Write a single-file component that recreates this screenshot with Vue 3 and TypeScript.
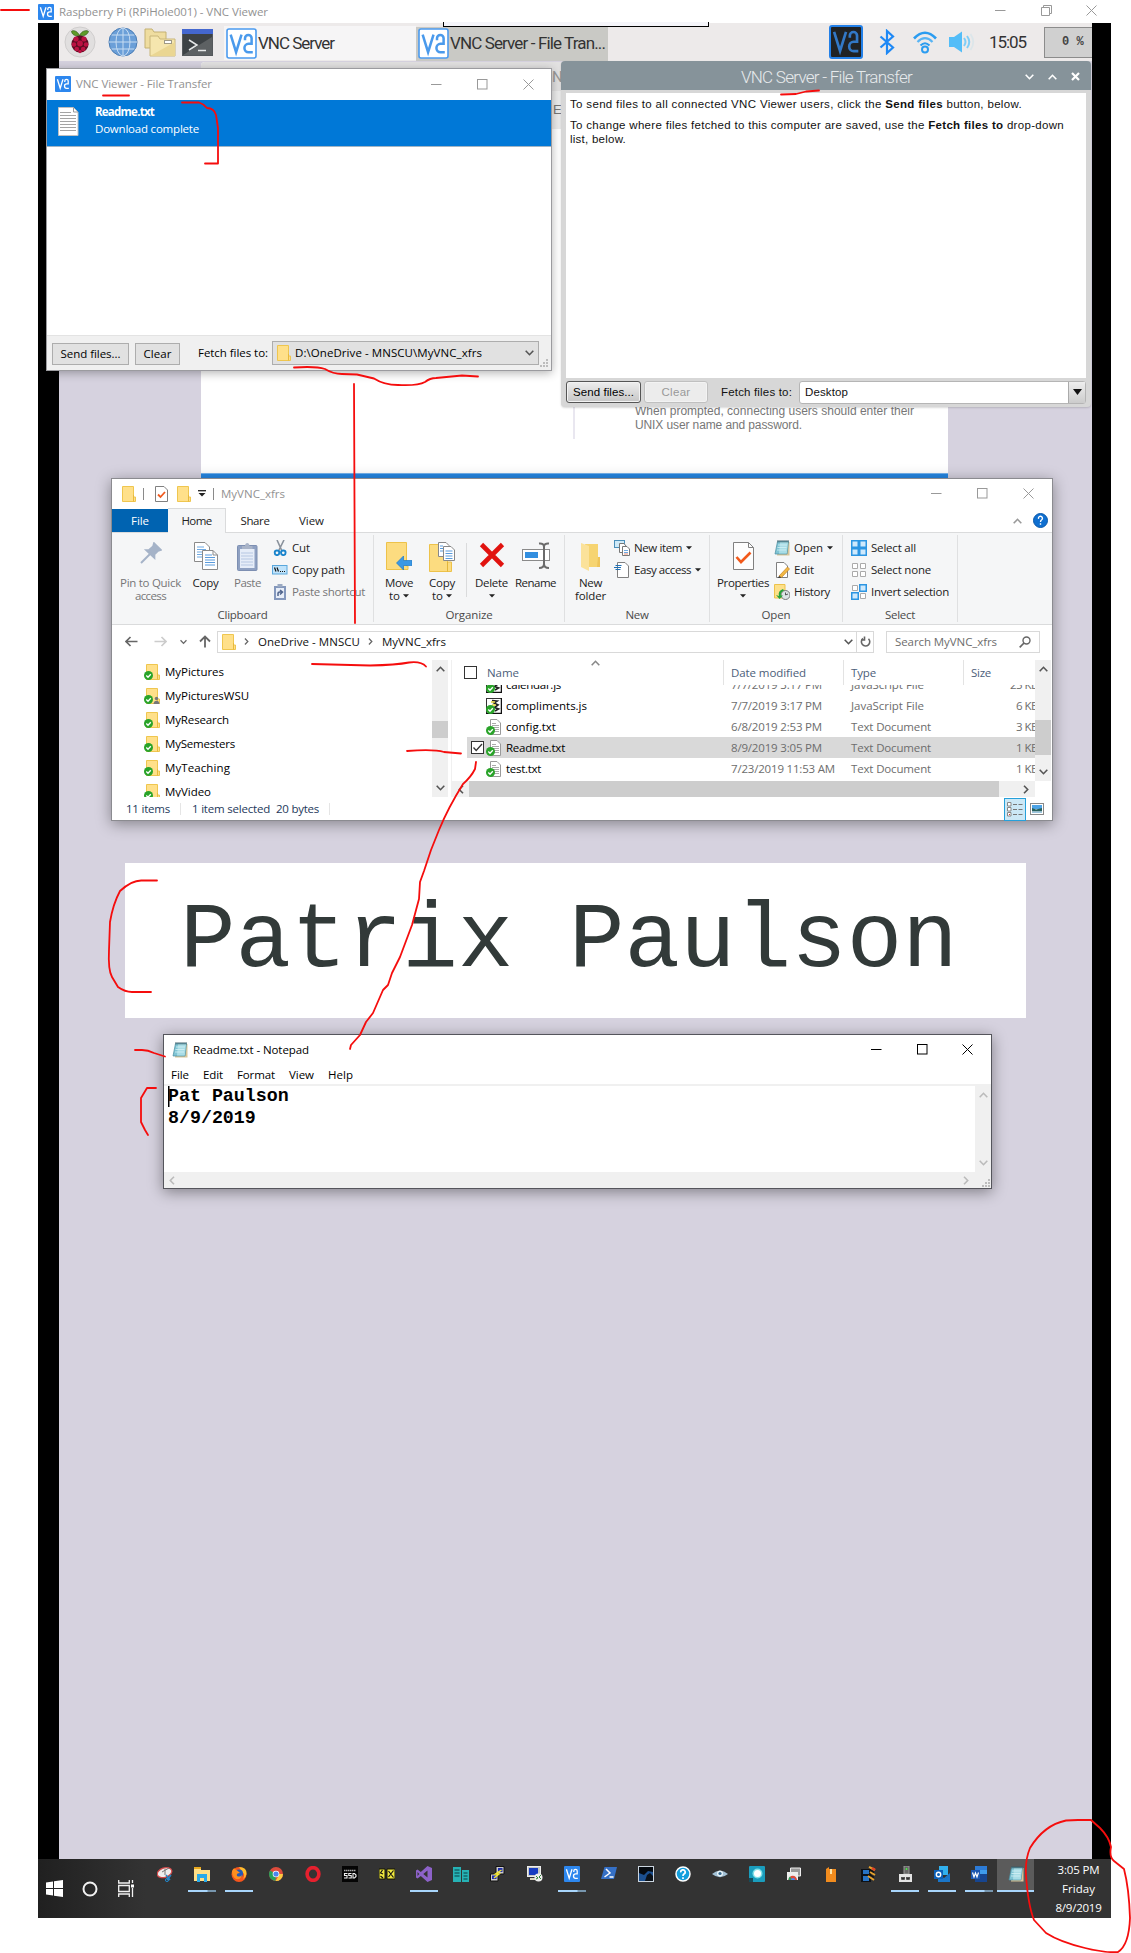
<script setup lang="ts">
import { h } from 'vue'
import type { Directive, FunctionalComponent } from 'vue'

// Spreads a label's letters so that it takes the given width in pixels.
const vFit: Directive<HTMLElement, number> = {
  mounted(el, binding) {
    const natural = el.getBoundingClientRect().width
    const count = (el.textContent ?? '').trim().length
    el.style.letterSpacing = `${(binding.value - natural) / count}px`
    el.style.width = `${binding.value}px`
  },
}

type IconDef = [number, number, string]

const vncGlyph = 'M2.4 3.2L5.2 12.2L8 3.2M9.8 6V5A1.700 1.700 0 0 1 13.200 5V7.900H11.600A2.100 2.200 0 0 0 11.600 12.300H13.800'
const folderArt = '<path d="M.5 .5H11.5V11H13.5V15.5H.5Z" fill="#ffe08a" stroke="#efc64f"/><path d="M11.5 9V15.5" stroke="#e8b93c"/>'
const okBadge = '<circle cx="4.500" cy="11.500" r="4.500" fill="#29a329"/><path d="M2.300 11.500l1.700 1.700 2.800-3" fill="none" stroke="#fff" stroke-width="1.300"/>'
const textPage = '<path d="M4.500 .500H11L14.500 4V15.500H4.500Z" fill="#fff" stroke="#9a9a9a"/><path d="M6 4.500h4M6 6.500h7M6 8.500h7M6 10.500h7M6 12.500h7" stroke="#aaa"/>'
const notepadArt = '<path d="M4 2H15.500V15.500H3Z" fill="#d8c59a"/><path d="M3.500 1.500H14.500L13 14H1Z" fill="#7fc4d4" stroke="#4b8ea0" stroke-width=".700"/><path d="M6 2H14L12.800 13.500H5Z" fill="#a9dde6"/><path d="M4 5h9M3.500 7.500h9M3 10h9" stroke="#d5f1f5" stroke-width=".800"/><path d="M4 0v2.500M6 0v2.500M8 0v2.500M10 0v2.500M12 0v2.500M14 0v2.500" stroke="#385a64" stroke-width=".900"/>'
const copyPages = '<path d="M.500 .500H11L15.500 5V19.500H.500Z" fill="#fff" stroke="#8a8a8a"/><path d="M3 5h7M3 7.500h9M3 10h9M3 12.500h9M3 15h9" stroke="#6ea9e2"/><path d="M8.500 8.500H19L23.500 13V27.500H8.500Z" fill="#fff" stroke="#8a8a8a"/><path d="M19 8.500V13H23.500" fill="none" stroke="#8a8a8a"/><path d="M11 13h7M11 15.500h10M11 18h10M11 20.500h10M11 23h10" stroke="#5a9bdc"/>'

const icons: Record<string, IconDef> = {
  vnc: [16, 16, `<rect width="16" height="16" rx="1" fill="#2d87ee"/><path d="${vncGlyph}" fill="none" stroke="#fff" stroke-width="1.300"/>`],
  vncLight: [31, 31, `<rect x="1" y="1" width="29" height="29" rx="2" fill="#fff" stroke="#4b9bef" stroke-width="1.600"/><g transform="translate(0 .500) scale(1.940)"><path d="${vncGlyph}" fill="none" stroke="#4a9aec" stroke-width="1.300"/></g>`],
  vncDark: [34, 34, `<rect x="1" y="1" width="32" height="32" rx="2" fill="#202224" stroke="#2380e8" stroke-width="2"/><g transform="scale(2.125)"><path d="${vncGlyph}" fill="none" stroke="#3278c6" stroke-width="1.250"/></g>`],
  pi: [32, 32, '<circle cx="16" cy="16" r="15" fill="#e1dfdf" stroke="#cfcdcd"/><path d="M15.500 9.500C13 4 8 4 7.500 5.500C8 9 12 10.500 15.500 9.500C19 10.500 23.500 9 24.500 5.500C23.500 4 18 4 15.500 9.500Z" fill="#5f9c28" stroke="#2f5a12" stroke-width=".700"/><circle cx="16" cy="18" r="8.600" fill="#5c0c22"/><g fill="#bb1142"><circle cx="12" cy="13" r="2.600"/><circle cx="20" cy="13" r="2.600"/><circle cx="16" cy="17.500" r="2.900"/><circle cx="10" cy="18.500" r="2.300"/><circle cx="22" cy="18.500" r="2.300"/><circle cx="12.800" cy="23" r="2.300"/><circle cx="19.200" cy="23" r="2.300"/><circle cx="16" cy="25.500" r="1.700"/></g>'],
  globe: [30, 30, '<circle cx="15" cy="15" r="14" fill="#6b9fd8" stroke="#4a7cb4"/><path d="M15 1V29M1 15H29M3.500 8H26.500M3.500 22H26.500" stroke="#c7dcf2"/><ellipse cx="15" cy="15" rx="7" ry="14" fill="none" stroke="#c7dcf2"/>'],
  files: [32, 30, '<path d="M1 21V2H8L10 5H22V21Z" fill="#efdda0" stroke="#c4b172"/><path d="M6 29V9H14L16 12H31V29Z" fill="#f5e6ae" stroke="#c9b67a"/><path d="M6 29L31 15V29Z" fill="#ead692"/><rect x="20.500" y="13.500" width="7" height="3" fill="#fff" stroke="#9f9a86"/>'],
  terminal: [31, 27, '<rect x=".500" y=".500" width="30" height="26" fill="#3d4245" stroke="#55595c"/><path d="M1 26L30 8V26Z" fill="#5d6163"/><rect width="31" height="5" fill="#4467cf"/><path d="M7 11L15 16L7 21M16 21.500H24" fill="none" stroke="#e6e8e8" stroke-width="1.500"/>'],
  bluetooth: [16, 26, '<path d="M1.500 7.500L14 18.500L8 24V2L14 7.500L1.500 18.500" fill="none" stroke="#1e88f5" stroke-width="2.200"/>'],
  wifi: [26, 26, '<g fill="none" stroke="#2b9cf0"><path d="M2 9.500Q13-2 24 9.500" stroke-width="2.600"/><path d="M5.500 13Q13 5.500 20.500 13" stroke-width="2.200" stroke="#58b4f4"/><path d="M8.500 16.500Q13 12 17.500 16.500" stroke-width="2"/><circle cx="13" cy="20.500" r="3" stroke-width="2"/></g>'],
  speaker: [28, 24, '<path d="M1 7H6L14 1.500V22.500L6 17H1Z" fill="#53bdf8"/><path d="M16 8Q19 12 16 16M19 6Q23.500 12 19 18" fill="none" stroke="#7fcdf7" stroke-width="2"/><path d="M22.500 4Q28 12 22.500 20" fill="none" stroke="#dce6ea" stroke-width="1.800"/>'],
  min: [11, 11, '<path d="M0 5.500H10.500" stroke="currentColor"/>'],
  max: [11, 11, '<rect x=".500" y=".500" width="9.500" height="9.500" fill="none" stroke="currentColor"/>'],
  restore: [11, 11, '<path d="M.500 2.500H8.500V10.500H.500ZM2.500 2.500V.500H10.500V8.500H8.500" fill="none" stroke="currentColor"/>'],
  close: [11, 11, '<path d="M.500 .500L10.500 10.500M10.500 .500L.500 10.500" stroke="currentColor"/>'],
  chevDown: [9, 6, '<path d="M.700 .700L4.500 4.700L8.300 .700" fill="none" stroke="currentColor" stroke-width="1.600"/>'],
  chevUp: [9, 6, '<path d="M.700 5.300L4.500 1.300L8.300 5.300" fill="none" stroke="currentColor" stroke-width="1.600"/>'],
  chevRight: [6, 9, '<path d="M1 .700L4.700 4.500L1 8.300" fill="none" stroke="currentColor" stroke-width="1.600"/>'],
  chevLeft: [6, 9, '<path d="M5 .700L1.300 4.500L5 8.300" fill="none" stroke="currentColor" stroke-width="1.600"/>'],
  cross: [9, 9, '<path d="M1 1L8 8M8 1L1 8" stroke="currentColor" stroke-width="2.200"/>'],
  tri: [6, 4, '<path d="M0 .300H6L3 3.500Z" fill="currentColor"/>'],
  triBig: [9, 6, '<path d="M0 0H9L4.500 6Z" fill="currentColor"/>'],
  qatMore: [8, 7, '<path d="M0 .700H8" stroke="#222" stroke-width="1.300"/><path d="M.500 3H7.500L4 6.500Z" fill="#222"/>'],
  grip: [9, 9, '<g fill="#bdbdbd"><path d="M6 0h2v2H6zM3 3h2v2H3zM6 3h2v2H6zM0 6h2v2H0zM3 6h2v2H3zM6 6h2v2H6z"/></g>'],
  docLarge: [21, 29, '<path d="M.500 .500H15.500L20 5V28.500H.500Z" fill="#fff" stroke="#c0c0c0"/><path d="M15.500 .500V5H20" fill="none" stroke="#999"/><path d="M2 5.500h11M2 8.500h16M2 11.500h16M2 14.500h16M2 17.500h16M2 20.500h16M2 23.500h16" stroke="#a4a4a4" stroke-width="1.200"/>'],
  folder: [14, 16, folderArt],
  folderOk: [16, 16, `<g transform="translate(2 0)">${folderArt}</g>${okBadge}`],
  folderShared: [16, 16, `<g transform="translate(2 0)">${folderArt}</g><circle cx="12.500" cy="10.500" r="1.700" fill="#777"/><path d="M9.500 16C9.500 11.500 15.500 11.500 15.500 16Z" fill="#777"/>${okBadge}`],
  textOk: [16, 16, textPage + okBadge],
  scriptOk: [16, 16, `<rect x=".500" y=".500" width="15" height="15" fill="#fff" stroke="#333"/><path d="M15.500 0V15.500H0" fill="none" stroke="#111" stroke-width="1.500"/><path d="M6 2.500L11 3L8 5L12 7L8.500 9.500L12.500 11L9 13" fill="none" stroke="#222" stroke-width="1.700"/><path d="M5 4h4M6 7h4" stroke="#e3d33c" stroke-width="1.500"/>${okBadge}`],
  docCheck: [13, 16, '<path d="M.500 .500H9L12.500 4V15.500H.500Z" fill="#fff" stroke="#808080"/><path d="M3 8.500L5.500 11L10 6" fill="none" stroke="#f05a1e" stroke-width="1.800"/>'],
  notepad: [16, 16, notepadArt],
  pin: [22, 22, '<path d="M14 1L21 8L18 9L14.500 12.500V16L6 8H9L13 4.500Z" fill="#a5b3c8" stroke="#a5b3c8" stroke-width="1.700"/><path d="M10 12L1 21" stroke="#a5b3c8" stroke-width="2"/>'],
  copy: [24, 28, copyPages],
  paste: [21, 29, '<rect x=".500" y="3.500" width="19.500" height="25" rx="1" fill="#8fa1c2" stroke="#7d8fb2"/><rect x="3" y="7" width="14.500" height="19" fill="#e6edf8"/><path d="M4 11h12M4 14h12M4 17h12M4 20h12M4 23h12" stroke="#b6c7e2"/><path d="M5 7V4H8C8 0 12.500 0 12.500 4H15.500V7Z" fill="#a9b4c8"/>'],
  cut: [16, 16, '<path d="M5 0L10 11M12 0L6.500 11" stroke="#8a929c" stroke-width="1.600"/><circle cx="5" cy="12.800" r="2.300" fill="none" stroke="#1a84cc" stroke-width="1.900"/><circle cx="11.300" cy="12.800" r="2.300" fill="none" stroke="#1a84cc" stroke-width="1.900"/>'],
  copyPath: [16, 16, '<rect x=".500" y="3.500" width="14.500" height="8.500" fill="#bfe3fb" stroke="#5aa7dc"/><path d="M2.500 5.500L4 9.500M5 5.500L6.500 9.500M8 9.500h1M10 9.500h1M12 9.500h1" stroke="#111" stroke-width="1.200"/>'],
  pasteShortcut: [16, 16, '<rect x="2" y="2" width="12" height="14" fill="#8498bd"/><rect x="4" y="4" width="8" height="10" fill="#e8eef8"/><rect x="5.500" y="0" width="5" height="3" fill="#9aa9c2"/><path d="M6 12V9.500Q6 8 8 8H10M8 6L10.500 8L8 10.500" fill="none" stroke="#51668e" stroke-width="1.500"/>'],
  moveTo: [26, 28, '<path d="M.500 .500H20.500V24H22V27.500H.500Z" fill="#fcdc80" stroke="#edc24a"/><path d="M10.500 21L17.500 14V18.500H26V23.500H17.500V28Z" fill="#3b98e5" stroke="#1d78c6" stroke-width=".700"/>'],
  copyTo: [27, 30, '<path d="M.500 2.500H18.500V20H22.500V29.500H.500Z" fill="#fcdc80" stroke="#edc24a"/><path d="M18.500 20V29.500" stroke="#e3b63b"/><path d="M9.500 .500H17L20 3.500V14.500H9.500Z" fill="#fff" stroke="#888"/><path d="M14.500 4.500H22L25.500 8V18.500H14.500Z" fill="#fff" stroke="#888"/><path d="M16.500 9h7M16.500 11.500h7M16.500 14h7M16.500 16.500h7M11 4h3M11 6.500h3M11 9h3" stroke="#5a9bdc"/>'],
  del: [26, 26, '<path d="M2.500 2.500L23.500 23.500M23.500 2.500L2.500 23.500" stroke="#e1130f" stroke-width="4.600"/>'],
  rename: [28, 28, '<rect x=".500" y="7.500" width="27" height="11" fill="#fff" stroke="#8a8a8a"/><rect x="3" y="10" width="13" height="6" fill="#338fe0"/><path d="M17 1.500Q22 1 22 5V22Q22 26 17 26M27 1.500Q22 1 22 5V22Q22 26 27 26" fill="none" stroke="#6b6b6b" stroke-width="2"/>'],
  newFolder: [20, 29, '<path d="M4 2H17V15H19V25H6Z" fill="#f6d471"/><path d="M0 1L8 4V29L0 25Z" fill="#fbe29a"/><path d="M17 15L19 15V25L16 25Z" fill="#eec45a"/>'],
  newItem: [16, 16, '<rect x=".500" y=".500" width="10" height="7" fill="#cfeaf8" stroke="#4b8fba"/><path d="M5.500 3.500H10L12 6V12.500H5.500Z" fill="#fff" stroke="#777"/><path d="M8.500 6.500H13L15.500 9V15.500H8.500Z" fill="#fff" stroke="#777"/><path d="M10 10.500h4M10 12.500h4" stroke="#6ea9e2"/><path d="M10 14h4" stroke="#e58a74"/>'],
  easy: [16, 16, '<path d="M3.500 .500H11L14.500 4V15.500H3.500Z" fill="#fff" stroke="#808080"/><path d="M1.500 3.500h6M0 5.500h7M1.500 7.500h5" stroke="#1f70b5" stroke-width="1.200"/>'],
  properties: [21, 28, '<path d="M.500 .500H15.500L20.500 5.500V27.500H.500Z" fill="#fdfdfd" stroke="#808080"/><path d="M15.500 .500V5.500H20.500" fill="none" stroke="#808080"/><path d="M3.500 15L8 20L17.500 10.500" fill="none" stroke="#f2591a" stroke-width="2.600"/>'],
  edit: [16, 16, '<path d="M2.500 .500H10L13.500 4V15.500H2.500Z" fill="#fff" stroke="#808080"/><path d="M5 14L13.500 5L15.500 7L7.500 15.500Z" fill="#f2b843" stroke="#c58427" stroke-width=".700"/><path d="M5 14L7.500 15.500L4 16Z" fill="#333"/>'],
  history: [16, 16, '<path d="M.500 .500H11V14H.500Z" fill="#fde08a" stroke="#edc24a"/><circle cx="11.500" cy="11" r="4.500" fill="#dce4e6" stroke="#777"/><path d="M11.500 8.500V11L14 10" fill="none" stroke="#555"/><path d="M9 5Q3.500 7 5 12L2 11L5.500 15L9 11.500L6.800 11.500Q6.500 8 10 6.500Z" fill="#27a33c"/>'],
  selAll: [16, 16, '<path d="M.750 .750H7.250V7.250H.750ZM8.750 .750H15.250V7.250H8.750ZM.750 8.750H7.250V15.250H.750ZM8.750 8.750H15.250V15.250H8.750Z" fill="#cfe9fc" stroke="#2c95e2" stroke-width="1.500"/>'],
  selNone: [16, 16, '<path d="M1.500 1.500H6.500V6.500H1.500ZM9.500 1.500H14.500V6.500H9.500ZM1.500 9.500H6.500V14.500H1.500ZM9.500 9.500H14.500V14.500H9.500Z" fill="#fff" stroke="#aaa"/>'],
  selInv: [16, 16, '<path d="M1.500 1.500H6.500V6.500H1.500ZM9.500 9.500H14.500V14.500H9.500Z" fill="#fff" stroke="#aaa"/><path d="M8.750 .750H15.250V7.250H8.750ZM.750 8.750H7.250V15.250H.750Z" fill="#cfe9fc" stroke="#2c95e2" stroke-width="1.500"/>'],
  back: [13, 11, '<path d="M12.500 5.500H1M5.500 1L1 5.500L5.500 10" fill="none" stroke="currentColor" stroke-width="1.700"/>'],
  forward: [13, 11, '<path d="M.500 5.500H12M7.500 1L12 5.500L7.500 10" fill="none" stroke="currentColor" stroke-width="1.700"/>'],
  up: [12, 13, '<path d="M6 12.500V1.500M1 6.500L6 1.500L11 6.500" fill="none" stroke="currentColor" stroke-width="1.800"/>'],
  refresh: [11, 12, '<path d="M8.500 2.800A4.200 4.200 0 1 1 3 2.500M4.500 .500V4H1" fill="none" stroke="#666" stroke-width="1.600"/>'],
  search: [12, 12, '<circle cx="7.500" cy="4.500" r="3.500" fill="none" stroke="#666" stroke-width="1.400"/><path d="M5 7L.700 11.300" stroke="#666" stroke-width="1.700"/>'],
  help: [15, 15, '<circle cx="7.500" cy="7.500" r="7" fill="#0f6fd0" stroke="#0a58aa"/><path d="M5.500 5.800A2 2 0 1 1 8.500 7Q7.500 7.600 7.500 9M7.500 10.300V11.800" fill="none" stroke="#fff" stroke-width="1.400"/>'],
  tick: [13, 13, '<path d="M2.500 6.500L5.200 9.500L11 3" fill="none" stroke="#333" stroke-width="1.300"/>'],
  details: [16, 15, '<path d="M.500 .500h3.500v3.500H.500zM.500 5.500h3.500V9H.500zM.500 10.500h3.500V14H.500z" fill="#fff" stroke="#888"/><path d="M6 2.500h4M11.500 2.500h4M6 7.500h4M11.500 7.500h4M6 12.500h4M11.500 12.500h4" stroke="#777"/><path d="M2 12h1v1H2z" fill="#d33"/>'],
  thumbs: [14, 12, '<rect x=".500" y=".500" width="13" height="11" fill="#fff" stroke="#888"/><path d="M2 2h10v4H2z" fill="#4da3e6"/><path d="M2 5L6 6.500L12 5V8.500H2Z" fill="#28615e"/><path d="M2 8.500h10v1.500H2z" fill="#9cc6e0"/>'],
  start: [17, 17, '<path d="M0 2.500L7 1.500V8H0ZM8 1.300L17 0V8H8ZM0 9H7V15.500L0 14.500ZM8 9H17V17L8 15.700Z" fill="#fff"/>'],
  cortana: [16, 16, '<circle cx="8" cy="8" r="6.500" fill="none" stroke="#f2f2f2" stroke-width="2"/>'],
  taskView: [17, 17, '<path d="M.700 0V3H11.300V0M.700 17V14H11.300V17M.700 5.500H11.300V11.500H.700ZM14.500 0V3M14.500 8V17" fill="none" stroke="#f2f2f2" stroke-width="1.300"/><rect x="13" y="4.500" width="3" height="3" fill="#fff"/>'],
  snip: [16, 16, '<ellipse cx="7.500" cy="6.500" rx="7.500" ry="4.700" fill="#eee" stroke="#d34a4a" stroke-width="1.300" transform="rotate(-18 8 6.500)"/><path d="M5 6L12 2M8 3V9" stroke="#777"/><path d="M9 9L13 14M14 9L10 14" stroke="#2484c6" stroke-width="1.500"/><circle cx="10" cy="14" r="1.600" fill="none" stroke="#2484c6"/>'],
  explorer: [16, 16, '<path d="M0 1H7V4H16V15H0Z" fill="#ffdf86"/><path d="M0 1H7V3H0Z" fill="#e8a91e"/><path d="M3 16V8H13V16H10V12H6V16Z" fill="#29a9e8"/>'],
  firefox: [16, 16, '<circle cx="8" cy="8.500" r="7.500" fill="#f5551d"/><path d="M8 1Q16 1 15.500 8Q15 11 12 13Q15 8 11 6Z" fill="#ffbd2e"/><circle cx="8" cy="7.500" r="4" fill="#2459b8"/><path d="M1 5Q3 1 4 3Q7 5 9 7Q5 7 6 10Q9 11.500 11 9Q10 14 5 13Q1 11 1 5Z" fill="#ff8f1f"/>'],
  chrome: [16, 16, '<circle cx="8" cy="8" r="7" fill="#dd4b3c"/><path d="M8 8L2 4.400A7 7 0 0 0 7.500 15Z" fill="#27a05a"/><path d="M8 8H15A7 7 0 0 1 7.500 15L11 9Z" fill="#fcca3f"/><circle cx="8" cy="8" r="3.300" fill="#fff"/><circle cx="8" cy="8" r="2.600" fill="#4b86ee"/>'],
  opera: [16, 16, '<ellipse cx="8" cy="8" rx="5.900" ry="6.400" fill="none" stroke="#e5202e" stroke-width="3.600"/>'],
  ssd: [16, 16, '<rect width="16" height="16" fill="#050505"/><path d="M2 4.500H14" stroke="#aaa" stroke-width="1.500" stroke-dasharray="1.500 .500"/><path d="M5.500 7.500H2.500V9.500H5V12H2M9.500 7.500H6.800V9.500H9.200V12H6.500M11 7.500H12.500L14 9V10.500L12.500 12H11Z" fill="none" stroke="#f2f2f2" stroke-width="1.100"/>'],
  caliper: [16, 16, '<path d="M0 3H6V13H0ZM8 3H16V13H8Z" fill="#f0e840" stroke="#171700"/><path d="M3.500 4L1.500 7L4 8M1.500 10L4 12M9.500 5L14.500 11.500M14.500 4.500L9.500 11" fill="none" stroke="#111" stroke-width="1.200"/>'],
  vs: [16, 16, '<path d="M11.500 0L16 2V14L11.500 16L4.800 10L1.500 12.500L0 11.500V4.500L1.500 3.500L4.800 6ZM11.500 4.500L7.300 8L11.500 11.500ZM1.500 6V10L3.300 8Z" fill="#8d62c9" fill-rule="evenodd"/>'],
  server: [16, 16, '<path d="M0 1H8V16H0ZM9 4H16V16H9Z" fill="#26b2b5"/><path d="M1.500 4H6.500M1.500 7H6.500M1.500 10H6.500M10.500 7H14.500M10.500 10H14.500M10.500 13H14.500" stroke="#083f46" stroke-width="1.200"/>'],
  putty: [16, 16, '<path d="M6 .500H14V8H6Z" fill="#ccc" stroke="#111"/><path d="M8 2H12.500V6H8Z" fill="#202fae"/><path d="M.500 8H8V15H.500Z" fill="#ccc" stroke="#111"/><path d="M2 9.500H6.500V13H2Z" fill="#202fae"/><path d="M11.500 4L5.500 8H9L4 12" fill="none" stroke="#f3e732" stroke-width="1.500"/>'],
  remote: [16, 16, '<rect x=".500" y=".500" width="13" height="10" fill="#c6c9c5" stroke="#eee"/><rect x="2" y="2" width="9" height="7" fill="#173cc1"/><path d="M3 12H11V14H3Z" fill="#d9d6bf"/><circle cx="11.500" cy="11.500" r="4" fill="#eee"/><path d="M9 10L11 12L9 13M14 9L12 11L14 13" fill="none" stroke="#328938"/>'],
  powershell: [16, 14, '<path d="M3.500 1H16L13 13H0Z" fill="#3570c6"/><path d="M5 3L9 7L3.500 11M8.500 11H12.500" fill="none" stroke="#fff" stroke-width="1.500"/>'],
  night: [16, 16, '<rect x=".500" y=".500" width="15" height="15" fill="#1b4f8f" stroke="#cbd5df"/><path d="M1 1H15V6L10 5L6 9L1 7Z" fill="#050a10"/><path d="M7 15L9 9L12 7L15 10V15Z" fill="#0a1119"/>'],
  question: [16, 16, '<circle cx="8" cy="8" r="7" fill="#149fdd" stroke="#fff" stroke-width="1.500"/><path d="M5.800 6.300A2.200 2.200 0 1 1 9 8Q8 8.600 8 10M8 11.300V13" fill="none" stroke="#fff" stroke-width="1.700"/>'],
  eye: [16, 16, '<path d="M0 8Q8 1.500 16 8Q8 14.500 0 8Z" fill="#a4c2d6"/><circle cx="8" cy="7.500" r="3" fill="#e6f2f8"/><circle cx="8" cy="7.500" r="1.600" fill="#35688d"/>'],
  camera: [16, 16, '<rect width="16" height="16" rx="1" fill="#1a9dbd"/><circle cx="8.500" cy="7.500" r="5" fill="#7fe0e8"/><circle cx="8.500" cy="7.500" r="3.500" fill="#fff"/><path d="M0 12H4V16H0Z" fill="#154c5a"/>'],
  chromeRemote: [16, 16, '<path d="M4.500 2H14.500V10H4.500Z" fill="#999" stroke="#eee"/><path d="M1 6H12V14H1Z" fill="#eee"/><path d="M2.500 14A4.200 4.200 0 0 1 11 14Z" fill="#dd4b3c"/><path d="M2.500 14A4.200 4.200 0 0 1 4 10.500L6 14Z" fill="#27a05a"/><path d="M5 14A2 2 0 0 1 9 14Z" fill="#4b86ee"/>'],
  orange: [16, 16, '<path d="M3 3L6 1V3H13V16H3Z" fill="#f28c1e"/><path d="M7 3H9V8H7Z" fill="#ffe5a8"/>'],
  film: [16, 16, '<rect x="1" y="3" width="10" height="13" fill="#0d1117"/><path d="M3 4H9V8H3ZM3 10H9V15H3Z" fill="#2773c4"/><path d="M9 1L15 4M10 6L15 9M8 10L14 14" stroke="#e6a22c" stroke-width="2"/><path d="M9 3L14 6.500M9 8L14 11.500" stroke="#111" stroke-width="1.500"/><path d="M12 2L15 4" stroke="#e04024" stroke-width="2.500"/>'],
  usb: [16, 16, '<path d="M7 0H12V8H7Z" fill="#666" stroke="#999"/><path d="M9.500 2V4" stroke="#4bea45" stroke-width="1.500"/><rect x="2" y="8" width="13" height="8" fill="#e4e4e4"/><path d="M5 11V13H7V11M10 11V13H12V11" fill="none" stroke="#222" stroke-width="1.500"/>'],
  outlook: [16, 16, '<path d="M5 0H14V9H5Z" fill="#31b0ed"/><path d="M4 8L10 12L16 7V16H4Z" fill="#1a76c9"/><rect y="4" width="9" height="9" fill="#0c60b8"/><circle cx="4.500" cy="8.500" r="2.200" fill="none" stroke="#fff" stroke-width="1.400"/>'],
  word: [16, 16, '<path d="M4 0H16V16H4Z" fill="#2c7bd6"/><path d="M4 8H16V16H4Z" fill="#17458f"/><path d="M4 4H16V8H4Z" fill="#3f9cec"/><rect y="4" width="9" height="9" fill="#1b56b0"/><path d="M1.500 6.500L3 11L4.500 7L6 11L7.500 6.500" fill="none" stroke="#fff" stroke-width="1.200"/>'],
}

const Icon: FunctionalComponent<{ name: string }> = (props) => {
  const [w, hh, art] = icons[props.name]
  return h('svg', { width: w, height: hh, viewBox: `0 0 ${w} ${hh}`, innerHTML: art })
}
Icon.props = ['name']

interface Big { icon: string; lines: [string, number][]; arrow?: boolean; dim?: boolean; w: number; rule?: boolean }
interface Small { icon: string; text: string; w: number; arrow?: boolean; dim?: boolean }
interface Group { title: string; tw: number; w: number; bigs: Big[]; smalls: Small[] }

const groups: Group[] = [
  {
    title: 'Clipboard', tw: 50, w: 262,
    bigs: [
      { icon: 'pin', lines: [['Pin to Quick', 61], ['access', 31]], dim: true, w: 73 },
      { icon: 'copy', lines: [['Copy', 26]], w: 37 },
      { icon: 'paste', lines: [['Paste', 27]], dim: true, w: 47 },
    ],
    smalls: [
      { icon: 'cut', text: 'Cut', w: 18 },
      { icon: 'copyPath', text: 'Copy path', w: 53 },
      { icon: 'pasteShortcut', text: 'Paste shortcut', w: 73, dim: true },
    ],
  },
  {
    title: 'Organize', tw: 47, w: 191,
    bigs: [
      { icon: 'moveTo', lines: [['Move', 28], ['to', 11]], arrow: true, w: 46 },
      { icon: 'copyTo', lines: [['Copy', 26], ['to', 11]], arrow: true, w: 40 },
      { icon: 'del', lines: [['Delete', 33], ['', 0]], arrow: true, w: 54, rule: true },
      { icon: 'rename', lines: [['Rename', 41]], w: 39 },
    ],
    smalls: [],
  },
  {
    title: 'New', tw: 23, w: 145,
    bigs: [{ icon: 'newFolder', lines: [['New', 23], ['folder', 31]], w: 47 }],
    smalls: [
      { icon: 'newItem', text: 'New item', w: 48, arrow: true },
      { icon: 'easy', text: 'Easy access', w: 57, arrow: true },
    ],
  },
  {
    title: 'Open', tw: 29, w: 133,
    bigs: [{ icon: 'properties', lines: [['Properties', 52], ['', 0]], arrow: true, w: 62 }],
    smalls: [
      { icon: 'notepad', text: 'Open', w: 29, arrow: true },
      { icon: 'edit', text: 'Edit', w: 20 },
      { icon: 'history', text: 'History', w: 36 },
    ],
  },
  {
    title: 'Select', tw: 30, w: 115,
    bigs: [],
    smalls: [
      { icon: 'selAll', text: 'Select all', w: 45 },
      { icon: 'selNone', text: 'Select none', w: 60 },
      { icon: 'selInv', text: 'Invert selection', w: 78 },
    ],
  },
]

const tree: [string, number, string][] = [
  ['MyPictures', 59, 'folderOk'],
  ['MyPicturesWSU', 84, 'folderShared'],
  ['MyResearch', 64, 'folderOk'],
  ['MySemesters', 70, 'folderOk'],
  ['MyTeaching', 65, 'folderOk'],
  ['MyVideo', 46, 'folderOk'],
]

interface FileRow { name: string; nw: number; date: string; dw: number; type: string; yw: number; size: string; sw: number; icon: string; on?: boolean }
const files: FileRow[] = [
  { name: 'calendar.js', nw: 55, date: '7/7/2019 3:17 PM', dw: 91, type: 'JavaScript File', yw: 73, size: '25 KB', sw: 28, icon: 'scriptOk' },
  { name: 'compliments.js', nw: 81, date: '7/7/2019 3:17 PM', dw: 91, type: 'JavaScript File', yw: 73, size: '6 KB', sw: 22, icon: 'scriptOk' },
  { name: 'config.txt', nw: 50, date: '6/8/2019 2:53 PM', dw: 91, type: 'Text Document', yw: 80, size: '3 KB', sw: 22, icon: 'textOk' },
  { name: 'Readme.txt', nw: 59, date: '8/9/2019 3:05 PM', dw: 91, type: 'Text Document', yw: 80, size: '1 KB', sw: 22, icon: 'textOk', on: true },
  { name: 'test.txt', nw: 35, date: '7/23/2019 11:53 AM', dw: 104, type: 'Text Document', yw: 80, size: '1 KB', sw: 22, icon: 'textOk' },
]

const tasks: [string, string][] = [
  ['snip', ''], ['explorer', 'many'], ['firefox', 'one'], ['chrome', ''], ['opera', ''], ['ssd', ''], ['caliper', ''],
  ['vs', 'one'], ['server', ''], ['putty', ''], ['remote', ''], ['vnc', 'many'], ['powershell', ''], ['night', ''],
  ['question', ''], ['eye', ''], ['camera', ''], ['chromeRemote', ''], ['orange', ''], ['film', ''], ['usb', 'one'],
  ['outlook', 'one'], ['word', 'many'], ['notepad', 'front'],
]

const menus: [string, number][] = [['File', 18], ['Edit', 20], ['Format', 38], ['View', 25], ['Help', 25]]

const strokes: string[] = [
  'M1 10H29',
  'M103 95.500H129',
  'M182 102.500L199 102.500Q204 104 207 108Q214 108 216 115L218 128V163.500H205',
  'M781 94.500L796 94L806 91.500L819 90.500',
  'M294 367.500Q316 366 325 369Q333 374 342 374L357 374.500L374 378.500Q384 385 398 385Q418 386 425 382Q430 378 436 378L462 375.500L478 376.500',
  'M354 384L355 623',
  'M312 664L370 665.500Q396 665 409 662.500Q421 661 426 666.500',
  'M407 751Q434 749 444 752L461 753.500',
  'M476 762L475 769Q471 777 463 784Q448 808 439 830L431 850L424 871L420 882L419 899L412 925L400 957L392 973L388 985L383 990L373 1013L366 1022L360 1035L351 1045L350 1049',
  'M157 880.500H142Q132 880 120 891Q113 904 110 922L109 950Q108 970 112 977L118 987Q125 992 132 992H151',
  'M135 1050H142Q148 1050 154 1053L165 1056.500',
  'M156 1088H147L141 1098V1122L145 1130L148 1135',
  'M1078 1820H1091L1100 1828Q1109 1837 1111 1847Q1109 1857 1114 1861L1124 1869Q1129 1888 1130 1918Q1129 1945 1118 1952Q1105 1953 1085 1948Q1060 1942 1046 1933L1034 1920Q1028 1905 1026 1875Q1025 1860 1030 1848Q1044 1825 1066 1820.500Z',
]
</script>

<template>
  <main class="screen">
    <header class="viewer-bar">
      <Icon name="vnc" />
      <span v-fit="209" class="t viewer-title">Raspberry Pi (RPiHole001) - VNC Viewer</span>
      <span class="controls top"><Icon name="min" /><Icon name="restore" /><Icon name="close" /></span>
    </header>

    <section class="remote">
      <div class="desktop">
        <nav class="panel">
          <div class="launchers"><Icon name="pi" /><Icon name="globe" /><Icon name="files" /><Icon name="terminal" /></div>
          <div class="task"><Icon name="vncLight" /><span v-fit="76" class="t">VNC Server</span></div>
          <div class="task active"><Icon name="vncLight" /><span v-fit="155" class="t">VNC Server - File Tran...</span></div>
          <div class="tray">
            <Icon name="vncDark" /><Icon name="bluetooth" /><Icon name="wifi" /><Icon name="speaker" />
            <span v-fit="37" class="t">15:05</span>
            <span class="cpu">0 %</span>
          </div>
        </nav>
      </div>
    </section>
    <div class="toolbar-tab"></div>

    <section class="server-main">
      <div class="sm-title"><span class="t">NC</span></div>
      <div class="sm-head"><span class="t">E</span></div>
      <div class="sm-body">
        <p><span v-fit="279" class="t">When prompted, connecting users should enter their</span><br><span v-fit="167" class="t">UNIX user name and password.</span></p>
      </div>
      <div class="sm-foot"></div>
    </section>

    <section class="server-xfer">
      <header><span v-fit="171" class="t">VNC Server - File Transfer</span><span class="sx-ctl"><Icon name="chevDown" /><Icon name="chevUp" /><Icon name="cross" /></span></header>
      <div class="sx-text">
        <p><span v-fit="452" class="t">To send files to all connected VNC Viewer users, click the <b>Send files</b> button, below.</span></p>
        <p><span v-fit="494" class="t">To change where files fetched to this computer are saved, use the <b>Fetch files to</b> drop-down</span><br><span v-fit="56" class="t">list, below.</span></p>
      </div>
      <footer>
        <button class="sx-btn"><span v-fit="61" class="t">Send files...</span></button>
        <button class="sx-btn off"><span v-fit="29" class="t">Clear</span></button>
        <span v-fit="71" class="t sx-label">Fetch files to:</span>
        <div class="sx-combo"><span v-fit="43" class="t">Desktop</span><i><Icon name="triBig" /></i></div>
      </footer>
    </section>

    <section class="xfer">
      <header><Icon name="vnc" /><span v-fit="136" class="t">VNC Viewer - File Transfer</span><span class="controls"><Icon name="min" /><Icon name="max" /><Icon name="close" /></span></header>
      <div class="transfer">
        <Icon name="docLarge" />
        <div><b v-fit="59" class="t">Readme.txt</b><span v-fit="104" class="t">Download complete</span></div>
      </div>
      <div class="blank"></div>
      <footer>
        <button class="btn send"><span v-fit="60" class="t">Send files...</span></button>
        <button class="btn clear"><span v-fit="28" class="t">Clear</span></button>
        <span v-fit="70" class="t fetch">Fetch files to:</span>
        <div class="combo"><Icon name="folder" /><span v-fit="187" class="t">D:\OneDrive - MNSCU\MyVNC_xfrs</span><Icon name="chevDown" class="end" /></div>
        <Icon name="grip" class="grip" />
      </footer>
    </section>

    <section class="explorer">
      <header class="ex-title">
        <Icon name="folder" /><i class="bar"></i><Icon name="docCheck" /><Icon name="folder" /><Icon name="qatMore" /><i class="bar last"></i>
        <span v-fit="64" class="t">MyVNC_xfrs</span>
        <span class="controls"><Icon name="min" /><Icon name="max" /><Icon name="close" /></span>
      </header>
      <nav class="tabs">
        <span class="tab file"><span v-fit="18" class="t">File</span></span>
        <span class="tab home"><span v-fit="30" class="t">Home</span></span>
        <span class="tab share"><span v-fit="29" class="t">Share</span></span>
        <span class="tab"><span v-fit="25" class="t">View</span></span>
        <span class="tab-end"><Icon name="chevUp" /><Icon name="help" /></span>
      </nav>
      <div class="ribbon">
        <div v-for="g in groups" :key="g.title" class="group" :style="{ width: g.w + 'px' }">
          <div class="tools">
            <div v-for="b in g.bigs" :key="b.icon" class="big" :class="{ dim: b.dim, rule: b.rule }" :style="{ width: b.w + 'px' }">
              <span class="pic"><Icon :name="b.icon" /></span>
              <span v-for="(l, i) in b.lines" :key="i" class="line">
                <span v-if="l[0]" v-fit="l[1]" class="t">{{ l[0] }}</span>
                <Icon v-if="b.arrow && i === 1" name="tri" />
              </span>
            </div>
            <div class="smalls">
              <div v-for="s in g.smalls" :key="s.text" class="small" :class="{ dim: s.dim }">
                <Icon :name="s.icon" /><span v-fit="s.w" class="t">{{ s.text }}</span><Icon v-if="s.arrow" name="tri" />
              </div>
            </div>
          </div>
          <div class="caption"><span v-fit="g.tw" class="t">{{ g.title }}</span></div>
        </div>
      </div>
      <div class="address">
        <span class="nav"><Icon name="back" /><Icon name="forward" class="pale" /><Icon name="chevDown" class="tiny" /><Icon name="up" /></span>
        <div class="path">
          <Icon name="folder" /><Icon name="chevRight" class="crumb" /><span v-fit="102" class="t">OneDrive - MNSCU</span><Icon name="chevRight" class="crumb" /><span v-fit="64" class="t">MyVNC_xfrs</span>
          <span class="path-end"><Icon name="chevDown" /><i><Icon name="refresh" /></i></span>
        </div>
        <div class="search"><span v-fit="102" class="t">Search MyVNC_xfrs</span><Icon name="search" /></div>
      </div>
      <div class="content">
        <ul class="tree">
          <li v-for="n in tree" :key="n[0]"><Icon :name="n[2]" /><span v-fit="n[1]" class="t">{{ n[0] }}</span></li>
        </ul>
        <div class="vscroll tree-scroll"><Icon name="chevUp" /><i></i><Icon name="chevDown" /></div>
        <div class="list">
          <div class="list-main">
            <div class="cols">
              <span class="c-name"><i class="box"></i><span v-fit="32" class="t">Name</span><Icon name="chevUp" class="sort" /></span>
              <span class="c-date"><span v-fit="75" class="t">Date modified</span></span>
              <span class="c-type"><span v-fit="25" class="t">Type</span></span>
              <span class="c-size"><span v-fit="20" class="t">Size</span></span>
            </div>
            <div class="rows">
              <div v-for="f in files" :key="f.name" class="row" :class="{ on: f.on }">
                <span class="r-name"><i class="box"><Icon v-if="f.on" name="tick" /></i><Icon :name="f.icon" /><span v-fit="f.nw" class="t">{{ f.name }}</span></span>
                <span class="r-date"><span v-fit="f.dw" class="t">{{ f.date }}</span></span>
                <span class="r-type"><span v-fit="f.yw" class="t">{{ f.type }}</span></span>
                <span class="r-size"><span v-fit="f.sw" class="t">{{ f.size }}</span></span>
              </div>
            </div>
            <div class="hscroll"><Icon name="chevLeft" /><i></i><Icon name="chevRight" /></div>
          </div>
          <div class="vscroll list-scroll"><Icon name="chevUp" /><i></i><Icon name="chevDown" /></div>
        </div>
      </div>
      <footer class="status">
        <span v-fit="44" class="t">11 items</span><i class="bar"></i><span v-fit="78" class="t">1 item selected</span><span v-fit="43" class="t bytes">20 bytes</span><i class="bar"></i>
        <span class="views"><b><Icon name="details" /></b><Icon name="thumbs" /></span>
      </footer>
    </section>

    <section class="nameplate">Patrix Paulson</section>

    <section class="notes">
      <header><Icon name="notepad" /><span v-fit="116" class="t">Readme.txt - Notepad</span><span class="controls"><Icon name="min" /><Icon name="max" /><Icon name="close" /></span></header>
      <nav><span v-for="m in menus" :key="m[0]" v-fit="m[1]" class="t">{{ m[0] }}</span></nav>
      <div class="notes-main">
        <pre>Pat Paulson
8/9/2019</pre>
        <div class="nscroll"><Icon name="chevUp" /><Icon name="chevDown" /></div>
      </div>
      <footer><Icon name="chevLeft" /><Icon name="chevRight" class="right" /><Icon name="grip" class="corner" /></footer>
    </section>

    <footer class="taskbar">
      <div class="system"><Icon name="start" /><Icon name="cortana" /><Icon name="taskView" /></div>
      <div class="apps"><span v-for="t in tasks" :key="t[0]" class="app" :class="t[1]"><Icon :name="t[0]" /></span></div>
      <div class="clock"><span v-fit="42" class="t">3:05 PM</span><span v-fit="33" class="t">Friday</span><span v-fit="46" class="t">8/9/2019</span></div>
    </footer>

    <svg class="ink" width="1131" height="1953" viewBox="0 0 1131 1953"><path v-for="s in strokes" :key="s" :d="s" /></svg>
  </main>
</template>

<style>
body { background: #fff; }
</style>

<style scoped>
* { box-sizing: border-box; }
.screen { position: relative; width: 1131px; height: 1953px; overflow: hidden; background: #fff; font: 11.5px/14px "Open Sans", "Noto Sans", sans-serif; color: #000; }
svg { display: block; flex: none; }
p, ul, pre { margin: 0; padding: 0; }
button { font: inherit; padding: 0; display: flex; align-items: center; justify-content: center; }
header, footer, nav { display: flex; align-items: center; }
.t { display: inline-block; white-space: nowrap; flex: none; }
.controls { display: flex; gap: 35px; margin-left: auto; color: #999; }

.viewer-bar { height: 23px; margin-left: 38px; width: 1073px; color: #929292; }
.viewer-title { margin-left: 5px; }
.controls.top { margin-right: 14px; margin-bottom: 3px; gap: 34.500px; }
.remote { width: 1073px; height: 1836px; margin-left: 38px; background: #000; padding: 0 19px 0 21px; }
.desktop { height: 100%; background: #d6d2df; }
.panel { height: 38px; background: #edeaea; font: 17px/20px Roboto, sans-serif; color: #333; }
.launchers { display: flex; align-items: center; gap: 6px; width: 165px; padding-left: 5px; }
.launchers svg:nth-child(2) { margin-left: 6px; }
.task { display: flex; align-items: center; gap: 1px; width: 192px; height: 34px; margin-top: 2px; padding-left: 2px; background: #f6f5f6; }
.task.active { background: #c9c9c5; margin-top: 4px; padding-bottom: 2px; }
.tray { display: flex; align-items: center; margin-left: auto; }
.tray svg:nth-child(2) { margin-left: 16px; }
.tray svg:nth-child(3) { margin-left: 17px; }
.tray svg:nth-child(4) { margin-left: 10px; }
.tray > .t { margin-left: 13px; }
.cpu { width: 48px; height: 31px; margin-left: 18px; padding-left: 17px; background: #d0d0d0; border: 1px solid #8c8c8c; border-right: 0; font: bold 12px/29px "Liberation Mono", monospace; white-space: pre; color: #444; }
.toolbar-tab { position: absolute; left: 443px; top: 22px; width: 266px; height: 5px; border: 1px solid #000; border-top: 0; background: #f5f5fa; }

.server-main { position: absolute; left: 201px; top: 62px; width: 747px; height: 418px; background: #fff; border-radius: 4px 4px 0 0; color: #777; font-family: "Liberation Sans", sans-serif; }
.sm-title { height: 29px; background: #e2e1e1; border-radius: 4px 4px 0 0; padding: 8px 0 0 351px; font: 15px/15px Roboto, sans-serif; color: #999; }
.sm-head { height: 38px; background: #ececec; padding: 12px 0 0 352px; font-size: 13px; }
.sm-body { height: 344px; padding-top: 275px; }
.sm-body p { margin-left: 372px; height: 35px; padding-left: 60px; border-left: 2px solid #e9e7f0; font-size: 12px; line-height: 14px; }
.sm-body p .t:first-child { margin-top: -1px; }
.sm-foot { height: 7px; background: #2587e4; border-top: 1px solid #74b3ef; }

.server-xfer { position: absolute; left: 561px; top: 61px; width: 530px; height: 346px; background: #d7d7d7; border-radius: 4px; padding: 0 5px; font: 11.500px/14px "Liberation Sans", sans-serif; color: #111; box-shadow: 0 1px 2px rgba(0, 0, 0, .15); }
.server-xfer header { height: 29px; margin: 0 -5px 3px; background: #86939a; border-radius: 4px 4px 0 0; padding: 2px 11px 0 180px; font: 300 17px/20px Roboto, sans-serif; color: #e6eaec; }
.sx-ctl { display: flex; gap: 14px; margin-left: auto; color: #fff; align-items: center; }
.sx-text { height: 285px; background: #fff; padding: 4px; }
.sx-text p { margin-bottom: 7px; }
.server-xfer footer { height: 28px; gap: 3px; }
.sx-btn { width: 75px; height: 22px; border: 1px solid #555; border-radius: 3px; background: linear-gradient(#eee, #c6c6c6); box-shadow: inset 0 0 0 1px #f3f3f3; }
.sx-btn.off { width: 64px; border-color: #c0c0c0; background: #ececec; color: #999; }
.sx-label { margin: 0 4px 0 10px; }
.sx-combo { display: flex; align-items: center; flex: 1; height: 23px; border: 1px solid #b5b5b5; border-radius: 3px; background: #fff; padding-left: 5px; }
.sx-combo i { margin-left: auto; width: 17px; height: 100%; border-left: 1px solid #aaa; background: linear-gradient(#eee, #ccc); display: flex; align-items: center; justify-content: center; }

.xfer { position: absolute; left: 46px; top: 68px; width: 506px; height: 303px; border: 1px solid #9b9b9f; background: #fff; box-shadow: 0 2px 9px rgba(0, 0, 0, .3); }
.xfer header { height: 31px; padding: 0 17px 1px 8px; color: #929292; gap: 5px; }
.transfer { display: flex; align-items: flex-start; gap: 16px; height: 47px; padding: 7px 0 0 11px; background: #0078d7; color: #fff; border-bottom: 1px solid #a0b4c5; }
.transfer div { display: flex; flex-direction: column; align-items: flex-start; gap: 3px; margin-top: -2px; }
.blank { height: 189px; border-bottom: 1px solid #e3e3e3; }
.xfer footer { height: 34px; background: #f0f0f0; padding: 1px 0 0 5px; }
.btn { height: 22px; background: #e1e1e1; border: 1px solid #adadad; }
.send { width: 77px; }
.clear { width: 45px; margin-left: 6px; }
.fetch { margin: 0 4px 2px 18px; }
.combo { display: flex; align-items: center; width: 267px; height: 24px; background: #e1e1e1; border: 1px solid #adadad; padding: 0 4px; gap: 4px; margin-bottom: 1px; }
.combo .end { margin-left: auto; color: #555; }
.grip { align-self: flex-end; margin-bottom: 2px; margin-left: 1px; }

.explorer { position: absolute; left: 111px; top: 478px; width: 942px; height: 343px; border: 1px solid #8b8b90; background: #fff; box-shadow: 0 3px 14px rgba(0, 0, 0, .38); }
.ex-title { height: 30px; padding: 0 18px 1px 10px; color: #929292; }
.bar { width: 1px; height: 12px; background: #8a8a8a; margin: 0 11px 0 7px; }
.bar.last { margin: 0 7px 0 7px; }
.ex-title > svg:nth-of-type(3) { margin: 0 7px 0 9px; }
.tabs { height: 24px; border-bottom: 1px solid #dadbdc; color: #222; }
.tab { display: flex; align-items: center; justify-content: center; height: 23px; }
.file { width: 56px; background: #0063b1; color: #fff; }
.home { width: 58px; height: 25px; background: #f5f6f7; border: 1px solid #dadbdc; border-bottom: 0; border-left: 0; }
.share { width: 58px; margin-right: 15px; }
.tab-end { margin-left: auto; display: flex; align-items: center; gap: 11px; padding-right: 4px; color: #999; }
.ribbon { display: flex; height: 92px; background: #f5f6f7; border-bottom: 1px solid #dadbdc; padding-top: 2px; color: #222; }
.group { height: 87px; border-right: 1px solid #dfe0e1; }
.tools { display: flex; height: 73px; padding-left: 2px; }
.big { display: flex; flex-direction: column; align-items: center; flex: none; }
.big.rule { position: relative; padding-left: 5px; }
.big.rule::before { content: ""; position: absolute; left: 4px; top: 8px; width: 1px; height: 54px; background: #dadbdc; }
.pic { height: 41px; padding-top: 7px; display: flex; align-items: flex-start; }
.line { display: flex; align-items: center; gap: 3px; height: 13px; min-height: 13px; }
.dim { color: #777; }
.smalls { padding-top: 2px; }
.group:first-child .smalls { padding-left: 1px; }
.group:last-child .smalls { padding-left: 6px; }
.small { display: flex; align-items: center; gap: 4px; height: 22px; }
.caption { display: flex; justify-content: center; color: #4a4a4a; height: 14px; }
.address { display: flex; align-items: center; height: 35px; padding: 0 12px 2px 13px; color: #666; }
.nav { display: flex; align-items: center; width: 92px; gap: 16px; }
.pale { color: #ccc; }
.tiny { margin: 0 -4px 0 -3px; width: 7px; }
.path { display: flex; align-items: center; width: 657px; height: 22px; border: 1px solid #d9d9d9; padding-left: 4px; color: #111; }
.crumb { width: 5px; height: 7px; margin: 0 9px 0 8px; color: #666; }
.path-end { display: flex; align-items: center; gap: 3px; margin-left: auto; height: 100%; color: #555; }
.path-end i { width: 17px; height: 100%; border-left: 1px solid #d9d9d9; display: flex; align-items: center; justify-content: center; }
.search { display: flex; align-items: center; justify-content: space-between; width: 154px; height: 22px; margin-left: 12px; border: 1px solid #d9d9d9; padding: 0 8px; color: #6d6d6d; }
.content { display: flex; height: 137px; overflow: hidden; }
.tree { list-style: none; width: 320px; padding-left: 32px; }
.tree li { display: flex; align-items: center; gap: 5px; height: 24px; }
.vscroll { display: flex; flex-direction: column; align-items: center; width: 16px; background: #f0f0f0; padding: 6px 0; color: #555; }
.vscroll i { width: 16px; background: #cdcdcd; }
.tree-scroll i { height: 17px; margin: 49px 0 auto; }
.list { display: flex; align-items: flex-start; flex: 1; margin-left: 3px; border-left: 1px solid #f0f0f0; }
.list-main { width: 583px; overflow: hidden; }
.list-scroll { height: 121px; }
.list-scroll i { height: 35px; margin: 48px 0 auto; }
.cols { display: flex; height: 25px; align-items: stretch; color: #4c607a; padding-left: 12px; }
.cols > span { display: flex; align-items: center; border-right: 1px solid #e3e3e3; padding-left: 7px; }
.cols .c-name { width: 260px; padding-left: 0; gap: 10px; }
.c-date, .c-type { width: 120px; }
.cols .c-size { border: 0; }
.sort { align-self: flex-start; margin-left: 62px; color: #888; }
.box { width: 13px; height: 13px; border: 1px solid #333; background: #fff; flex: none; }
.box svg { margin: -1px; }
.rows { height: 96px; overflow: hidden; }
.row { display: flex; height: 21px; margin-left: 15px; width: 568px; color: #6d6d6d; }
.row:first-child { margin-top: -11px; }
.row > span { display: flex; align-items: center; flex: none; }
.row.on { background: #d9d9d9; }
.r-name { width: 264px; padding-left: 4px; color: #000; }
.r-name .box { visibility: hidden; margin-right: 2px; }
.on .box { visibility: visible; }
.r-name .t { margin-left: 4px; }
.r-date { width: 120px; }
.r-type { width: 120px; }
.r-size { width: 67px; justify-content: flex-end; }
.hscroll { display: flex; align-items: center; height: 16px; background: #f0f0f0; padding: 0 6px; color: #555; }
.hscroll i { width: 530px; height: 16px; background: #cdcdcd; margin: 0 auto 0 5px; }
.status { height: 24px; padding-left: 14px; color: #1e395b; }
.status .bar { background: #e5e5e5; margin: 0 11px 0 10px; }
.bytes { margin-left: 6px; }
.views { display: flex; align-items: center; gap: 4px; margin-left: auto; padding-right: 8px; }
.views b { width: 22px; height: 23px; background: #cce8f6; border: 1px solid #26a0da; display: flex; align-items: center; justify-content: center; }

.nameplate { position: absolute; left: 125px; top: 863px; width: 901px; height: 155px; padding-left: 55px; background: #fff; font: 92.600px/158px "Liberation Mono", monospace; color: #323a39; white-space: pre; overflow: hidden; }

.notes { position: absolute; left: 163px; top: 1034px; width: 829px; height: 155px; border: 1px solid #55555c; background: #fff; box-shadow: 0 3px 14px rgba(0, 0, 0, .4); }
.notes header { height: 30px; padding: 0 18px 1px 8px; gap: 5px; }
.notes .controls { color: #000; gap: 34.500px; }
.notes nav { height: 19px; padding-left: 7px; gap: 14px; }
.notes-main { display: flex; height: 88px; border-top: 2px solid #f0f0f0; }
.notes pre { width: 807px; height: 86px; margin: -1px 0 0 4px; font: bold 18.300px/22px "Liberation Mono", monospace; background: linear-gradient(#000, #000) 0 1px / 1.500px 21px no-repeat; }
.nscroll { display: flex; flex-direction: column; justify-content: space-between; align-items: center; flex: 1; background: #f0f0f0; padding: 6px 0; color: #bbb; }
.notes footer { height: 16px; background: #f0f0f0; padding-left: 5px; color: #bbb; }
.notes .right { margin-left: 788px; }
.notes .corner { margin-left: auto; align-self: flex-end; }

.taskbar { width: 1073px; height: 59px; margin-left: 38px; background: linear-gradient(90deg, #202020, #333 10%, #333); color: #fff; align-items: stretch; }
.system { display: flex; align-items: center; width: 108px; padding-left: 8px; gap: 19px; }
.system svg:last-child { margin-left: 1px; }
.apps { display: flex; }
.app { width: 37px; height: 33px; display: flex; flex-direction: column; align-items: center; justify-content: space-between; padding-top: 7px; }
.app::after { content: ""; width: 28px; height: 2px; }
.one::after { background: #a8d5fb; }
.many::after { background: linear-gradient(90deg, #a8d5fb 19px, #7796ae 20px); }
.front { background: #5b5b5b; }
.front::after { width: 100%; background: #a8d5fb; }
.clock { display: flex; flex-direction: column; align-items: center; justify-content: space-around; width: 65px; margin-left: auto; padding-top: 1px; }

.ink { position: absolute; left: 0; top: 0; pointer-events: none; }
.ink path { fill: none; stroke: #f50d0d; stroke-width: 1.800; stroke-linecap: round; stroke-linejoin: round; }
</style>
